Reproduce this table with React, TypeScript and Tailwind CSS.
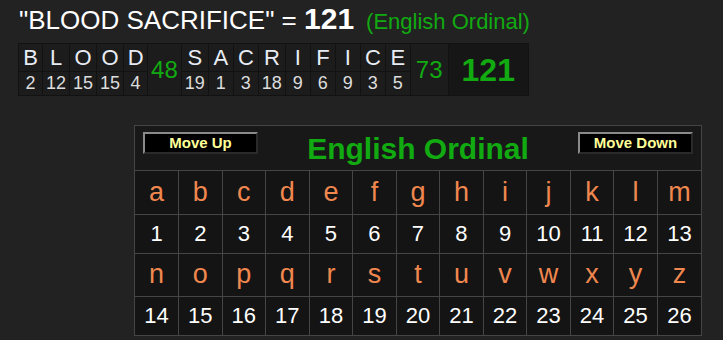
import React from "react";

const word1 = [
  ["B", 2],
  ["L", 12],
  ["O", 15],
  ["O", 15],
  ["D", 4],
] as const;
const word2 = [
  ["S", 19],
  ["A", 1],
  ["C", 3],
  ["R", 18],
  ["I", 9],
  ["F", 6],
  ["I", 9],
  ["C", 3],
  ["E", 5],
] as const;

const letters = "abcdefghijklmnopqrstuvwxyz".split("");

function MoveButton({ label }: { label: string }) {
  return (
    <button className="w-[115px] h-[22px] bg-black border-2 border-t-[#8a8a8a] border-l-[#8a8a8a] border-b-[#2a2a2a] border-r-[#2a2a2a] text-[#ffff99] font-bold text-[15px] leading-[18px] flex items-center justify-center">
      {label}
    </button>
  );
}

export default function App() {
  const rows = [letters.slice(0, 13), letters.slice(13)];
  return (
    <div
      className="w-[723px] h-[340px] bg-[#222222] overflow-hidden"
      style={{ fontFamily: '"Liberation Sans", Arial, sans-serif' }}
    >
      <div className="pl-[19px] pt-[4px] h-[40px] leading-[30px] whitespace-nowrap text-white">
        <span className="text-[26px]">"BLOOD SACRIFICE" = </span>
        <span className="text-[30px] font-bold">121</span>
        <span className="text-[22px] text-[#11aa11] ml-[12px]">(English Ordinal)</span>
      </div>
      <div className="pl-[18px] mt-[3px]">
        <table className="border-separate border-spacing-[1px] bg-[#121212]">
          <tbody>
            <tr>
              {word1.map(([l], i) => (
                <td key={"a" + i} className="w-[23px] bg-[#1c1c1c] text-[#e8ecf4] text-[22px] leading-[27px] px-[3px] text-center">
                  {l}
                </td>
              ))}
              <td rowSpan={2} className="bg-[#1c1c1c] text-[#11aa11] text-[24px] px-[3px] text-center align-middle">
                48
              </td>
              {word2.map(([l], i) => (
                <td key={"b" + i} className="w-[24px] bg-[#1c1c1c] text-[#e8ecf4] text-[22px] leading-[27px] px-[3px] text-center">
                  {l}
                </td>
              ))}
              <td rowSpan={2} className="bg-[#1c1c1c] text-[#11aa11] text-[24px] px-[5px] text-center align-middle">
                73
              </td>
              <td rowSpan={2} className="bg-[#161616] text-[#11aa11] text-[32px] font-bold px-[13px] text-center align-middle">
                121
              </td>
            </tr>
            <tr>
              {word1.map(([, n], i) => (
                <td key={"c" + i} className="bg-[#1c1c1c] text-[#dddddd] text-[18px] leading-[23px] px-[3px] text-center">
                  {n}
                </td>
              ))}
              {word2.map(([, n], i) => (
                <td key={"d" + i} className="bg-[#1c1c1c] text-[#dddddd] text-[18px] leading-[23px] px-[3px] text-center">
                  {n}
                </td>
              ))}
            </tr>
          </tbody>
        </table>
      </div>
      <div className="ml-[134px] mt-[29px] w-[568px] border border-[#454545] bg-[#181818]">
        <div className="h-[45px] flex items-start justify-between px-[8px] pt-[6px] border-b border-[#454545]">
          <MoveButton label="Move Up" />
          <div className="text-[#11aa11] font-bold text-[30px] leading-[32px] mt-[1px]">English Ordinal</div>
          <MoveButton label="Move Down" />
        </div>
        <table className="w-full table-fixed border-collapse">
          <tbody>
            {rows.map((row, ri) => (
              <React.Fragment key={ri}>
                <tr className="h-[43px]">
                  {row.map((l, i) => (
                    <td
                      key={l}
                      className={
                        "text-center text-[#f0874f] text-[27px] bg-[#141414] border-[#454545] border-b " +
                        (i < 12 ? "border-r" : "")
                      }
                    >
                      {l}
                    </td>
                  ))}
                </tr>
                <tr className="h-[39px]">
                  {row.map((l, i) => (
                    <td
                      key={l + "n"}
                      className={
                        "text-center text-white text-[22px] bg-[#141414] border-[#454545] " +
                        (ri === 0 ? "border-b " : "") +
                        (i < 12 ? "border-r" : "")
                      }
                    >
                      {ri * 13 + i + 1}
                    </td>
                  ))}
                </tr>
              </React.Fragment>
            ))}
          </tbody>
        </table>
      </div>
    </div>
  );
}
